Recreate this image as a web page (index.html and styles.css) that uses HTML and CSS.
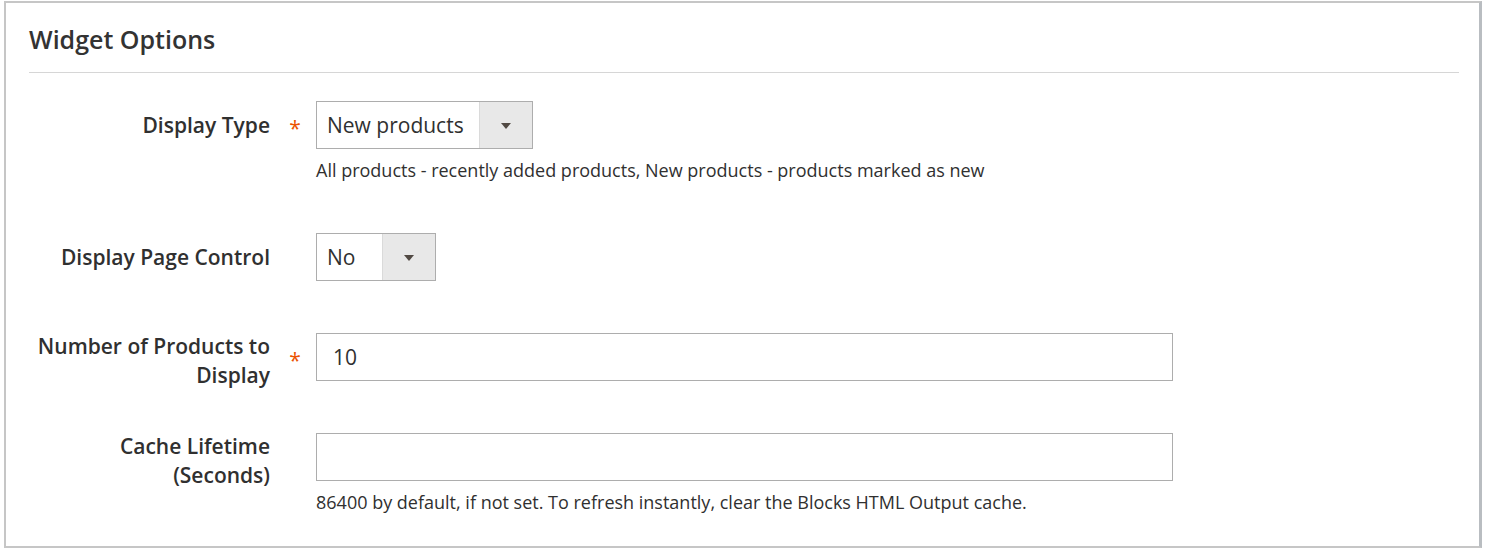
FILE: index.html
```html
<!DOCTYPE html>
<html lang="en">
<head>
<meta charset="utf-8">
<title>Widget Options</title>
<link rel="stylesheet" href="styles.css">
</head>
<body>
<section class="panel">
  <h2 class="panel-title">Widget Options</h2>
  <div class="fields">
    <div class="field">
      <label class="field-label">Display Type</label>
      <span class="req">*</span>
      <div class="control">
        <div class="select select-wide">
          <span class="select-value">New products</span>
          <span class="select-btn"><span class="caret"></span></span>
        </div>
      </div>
      <div class="note">All products - recently added products, New products - products marked as new</div>
    </div>

    <div class="field">
      <label class="field-label">Display Page Control</label>
      <span class="req"></span>
      <div class="control">
        <div class="select select-narrow">
          <span class="select-value">No</span>
          <span class="select-btn"><span class="caret"></span></span>
        </div>
      </div>
    </div>

    <div class="field">
      <label class="field-label field-label-tall">Number of Products to Display</label>
      <span class="req">*</span>
      <div class="control">
        <div class="input"><span class="input-value">10</span></div>
      </div>
    </div>

    <div class="field">
      <label class="field-label field-label-tall">Cache Lifetime (Seconds)</label>
      <span class="req"></span>
      <div class="control">
        <div class="input"></div>
      </div>
      <div class="note">86400 by default, if not set. To refresh instantly, clear the Blocks HTML Output cache.</div>
    </div>
  </div>
</section>
</body>
</html>
```

FILE: styles.css
```css
html, body {
  margin: 0;
  padding: 0;
  background: #ffffff;
}

body {
  font-family: "Open Sans", "Liberation Sans", sans-serif;
  color: #303030;
}

.panel {
  box-sizing: border-box;
  margin: 1px 0 0 4px;
  width: 1478px;
  height: 547px;
  border: 2px solid #c6c6c6;
  border-right: 3px solid #b9bdc1;
  padding: 21px 20px 0 23px;
  background: #ffffff;
}

.panel-title {
  margin: 0;
  font-size: 25px;
  line-height: 30px;
  font-weight: 600;
  color: #333333;
  padding-bottom: 18px;
  border-bottom: 1px solid #d6d6d6;
}

.fields {
  padding-top: 28px;
}

.field {
  display: grid;
  grid-template-columns: 241px 46px 1fr;
  grid-template-rows: 48px auto;
  align-items: center;
  margin-bottom: 52px;
}

.field-label {
  grid-column: 1;
  grid-row: 1;
  text-align: right;
  font-size: 21px;
  font-weight: 600;
  line-height: 29px;
  color: #303030;
}

.field-label-tall {
  align-self: start;
  margin-top: -1px;
}

.req {
  grid-column: 2;
  grid-row: 1;
  text-align: center;
  color: #eb5202;
  font-size: 21px;
  line-height: 20px;
  padding-top: 6px;
  padding-left: 4px;
}

.control {
  grid-column: 3;
  grid-row: 1;
}

.select {
  box-sizing: border-box;
  height: 48px;
  border: 1px solid #adadad;
  display: flex;
  align-items: stretch;
  background: #ffffff;
}

.select-wide { width: 217px; }
.select-narrow { width: 120px; }

.select-value {
  flex: 1;
  display: flex;
  align-items: center;
  padding-left: 10px;
  font-size: 21px;
  color: #303030;
}

.select-btn {
  width: 52px;
  background: #e8e8e8;
  border-left: 1px solid #dadada;
  display: flex;
  align-items: center;
  justify-content: center;
}

.caret {
  width: 0;
  height: 0;
  border-left: 5px solid transparent;
  border-right: 5px solid transparent;
  border-top: 6px solid #514943;
  margin-top: 1px;
}

.input {
  box-sizing: border-box;
  width: 857px;
  height: 48px;
  border: 1px solid #adadad;
  display: flex;
  align-items: center;
  padding-left: 16px;
}

.input-value {
  font-size: 21px;
  color: #303030;
}

.note {
  grid-column: 3;
  grid-row: 2;
  margin-top: 10px;
  font-size: 18px;
  line-height: 22px;
  color: #303030;
}
```
